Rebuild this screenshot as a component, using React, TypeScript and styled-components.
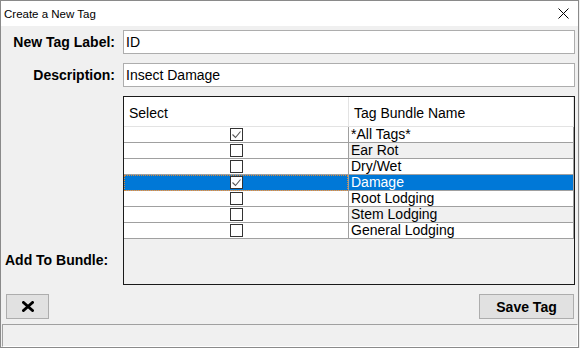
import React, { useState } from 'react'
import styled, { createGlobalStyle, css } from 'styled-components'

const GlobalStyle = createGlobalStyle`
    * { box-sizing: border-box; }
    body {
        margin: 0;
        background: #f0f0f0;
        font-family: "Liberation Sans", Arial, sans-serif;
    }
`

const Window = styled.div`
    width: 579px;
    height: 348px;
    border: 1px solid #8a8a8a;
    background: #f0f0f0;
    display: flex;
    flex-direction: column;
    color: #000;
`

const TitleBar = styled.div`
    height: 25px;
    background: #fff;
    display: flex;
    align-items: center;
    justify-content: space-between;
    padding: 0 9px 0 3px;
    font-size: 11.5px;
    flex-shrink: 0;
`

const Content = styled.div`
    flex: 1;
    display: grid;
    grid-template-columns: 114px 1fr;
    grid-template-rows: 24px 24px 189px auto;
    column-gap: 8px;
    row-gap: 9px;
    padding: 4px 3px 0 0;
`

const Label = styled.label<{ left?: boolean }>`
    font-size: 14px;
    font-weight: bold;
    align-self: center;
    justify-self: end;
    white-space: nowrap;
    ${p => p.left && css`
        justify-self: start;
        align-self: end;
        margin: 0 0 17px 4px;
    `}
`

const TextInput = styled.input`
    height: 24px;
    border: 1px solid #adadad;
    background: #fff;
    padding: 0 2px;
    font: 14px "Liberation Sans", Arial, sans-serif;
    color: #000;
    outline: none;
`

const GridBox = styled.div`
    border: 1px solid #1a1a1a;
    background: #f0f0f0;
    display: flex;
    flex-direction: column;
`

const HeaderRow = styled.div`
    display: flex;
    height: 30px;
    background: #fff;
    border-bottom: 1px solid #e3e3e3;
`

const HeaderCell = styled.div`
    width: 225px;
    border-right: 1px solid #e3e3e3;
    display: flex;
    align-items: center;
    padding: 3px 0 0 5px;
    font-size: 14px;
`

const Row = styled.div`
    display: flex;
    height: 16px;
`

const Cell = styled.div<{ selected?: boolean; shaded?: boolean; center?: boolean }>`
    width: 225px;
    height: 16px;
    border-right: 1px solid #a0a0a0;
    border-bottom: 1px solid #a0a0a0;
    background: ${p => p.selected ? '#0078d7' : p.shaded ? '#f0f0f0' : '#fff'};
    color: ${p => p.selected ? '#fff' : '#000'};
    font-size: 14px;
    line-height: 15px;
    padding-left: 2px;
    white-space: nowrap;
    position: relative;
    ${p => p.center && css`
        display: flex;
        justify-content: center;
        align-items: center;
        padding-left: 0;
    `}
    ${p => p.center && p.selected && css`
        &::after {
            content: '';
            position: absolute;
            inset: 0 0 -1px 0;
            border: 1px dotted #d98a3a;
        }
    `}
`

const Box = styled.span`
    width: 13px;
    height: 13px;
    border: 1px solid #333;
    background: #fff;
    display: flex;
    align-items: center;
    justify-content: center;
`

const Footer = styled.div`
    grid-column: 1 / -1;
    display: flex;
    justify-content: space-between;
    align-items: flex-start;
    padding: 0 1px 0 5px;
`

const Button = styled.button<{ wide?: boolean }>`
    height: 25px;
    width: ${p => p.wide ? '95px' : '43px'};
    border: 1px solid #adadad;
    background: #e1e1e1;
    font: bold 14px "Liberation Sans", Arial, sans-serif;
    color: #000;
    display: flex;
    align-items: center;
    justify-content: center;
    padding: 0;
`

const StatusBar = styled.div`
    height: 23px;
    margin-left: 1px;
    border-top: 1px solid #a0a0a0;
    border-left: 1px solid #a0a0a0;
    border-right: 1px solid #fff;
    border-bottom: 1px solid #fff;
    flex-shrink: 0;
`

const Check: React.FC<{ checked: boolean }> = ({ checked }) => (
    <Box>
        {checked && (
            <svg width="11" height="11" viewBox="0 0 11 11">
                <path d="M1.5 5.5 L4.5 8.5 L9.5 2.5" fill="none" stroke="#555" strokeWidth="1.1" />
            </svg>
        )}
    </Box>
)

const bundles = [
    { name: '*All Tags*', checked: true },
    { name: 'Ear Rot', checked: false },
    { name: 'Dry/Wet', checked: false },
    { name: 'Damage', checked: true },
    { name: 'Root Lodging', checked: false },
    { name: 'Stem Lodging', checked: false },
    { name: 'General Lodging', checked: false },
]

const App: React.FC = () => {
    const [label, setLabel] = useState('ID')
    const [desc, setDesc] = useState('Insect Damage')
    const selectedRow = 3

    return <>
        <GlobalStyle />
        <Window>
            <TitleBar>
                <span>Create a New Tag</span>
                <svg width="11" height="11" viewBox="0 0 11 11">
                    <path d="M0.5 0.5 L10.5 10.5 M10.5 0.5 L0.5 10.5" stroke="#000" strokeWidth="1" />
                </svg>
            </TitleBar>
            <Content>
                <Label>New Tag Label:</Label>
                <TextInput value={label} onChange={e => setLabel(e.target.value)} />
                <Label>Description:</Label>
                <TextInput value={desc} onChange={e => setDesc(e.target.value)} />
                <Label left>Add To Bundle:</Label>
                <GridBox>
                    <HeaderRow>
                        <HeaderCell>Select</HeaderCell>
                        <HeaderCell>Tag Bundle Name</HeaderCell>
                    </HeaderRow>
                    {bundles.map((b, i) => {
                        const selected = i === selectedRow
                        return <Row key={b.name}>
                            <Cell center selected={selected}><Check checked={b.checked} /></Cell>
                            <Cell selected={selected} shaded={i % 2 === 1}>{b.name}</Cell>
                        </Row>
                    })}
                </GridBox>
                <Footer>
                    <Button>
                        <svg width="12" height="11" viewBox="0 0 12 11">
                            <path d="M1.5 1.5 L10.5 9.5 M10.5 1.5 L1.5 9.5" stroke="#000" strokeWidth="3" strokeLinecap="round" />
                        </svg>
                    </Button>
                    <Button wide>Save Tag</Button>
                </Footer>
            </Content>
            <StatusBar />
        </Window>
    </>
}

export default App
